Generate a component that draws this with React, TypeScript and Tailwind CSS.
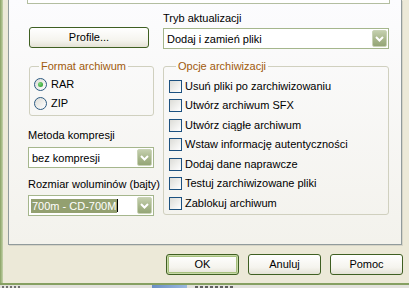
import { Fragment } from "react";

type ComboProps = {
  value: string;
  selected?: boolean;
  className?: string;
};

function DropArrow() {
  return (
    <div className="mr-[1px] flex h-[17px] w-[15px] items-center justify-center rounded-[2px] border border-[#c9d3b6] bg-[linear-gradient(to_bottom,#c4cfae,#a5b488_60%,#95a677)]">
      <svg width="9" height="6" viewBox="0 0 9 6">
        <path d="M1 1 L4.5 4.5 L8 1" fill="none" stroke="#ffffff" strokeWidth="2" />
      </svg>
    </div>
  );
}

function Combo({ value, selected, className }: ComboProps) {
  return (
    <div
      className={`flex h-[21px] items-center justify-between border border-[#a5b68c] bg-white ${className ?? ""}`}
    >
      {selected ? (
        <div className="ml-[2px] flex h-[14px] items-center">
          <span className="bg-[#93a070] pr-[1px] pl-[1px] leading-[14px] text-white">{value}</span>
          <span className="h-[13px] w-[1px] bg-black" />
        </div>
      ) : (
        <span className="pl-[3px] leading-[14px]">{value}</span>
      )}
      <DropArrow />
    </div>
  );
}

function Btn({ label, primary, className }: { label: string; primary?: boolean; className?: string }) {
  return (
    <button
      className={`flex h-[21px] items-center justify-center rounded-[3px] border border-[#3f5f22] bg-[linear-gradient(to_bottom,#ffffff,#f5f4ee_65%,#e4e2d6)] leading-[13px] ${
        primary ? "shadow-[inset_0_0_0_1px_#c7d9a8,inset_0_0_0_2px_#a6c07d]" : ""
      } ${className ?? ""}`}
    >
      {label}
    </button>
  );
}

function Radio({ label, checked }: { label: string; checked?: boolean }) {
  return (
    <div className="flex h-[13px] items-center gap-[4px]">
      <div className="flex h-[13px] w-[13px] items-center justify-center rounded-full border border-[#2c5a82] bg-[linear-gradient(135deg,#dcdcd7,#ffffff)]">
        {checked && <div className="h-[5px] w-[5px] rounded-full bg-[radial-gradient(circle_at_35%_35%,#7fd67f,#1f961f)]" />}
      </div>
      <span className="leading-[13px]">{label}</span>
    </div>
  );
}

function Check({ label, className }: { label: string; className?: string }) {
  return (
    <div className={`flex h-[13px] items-center gap-[3px] ${className ?? ""}`}>
      <div className="h-[13px] w-[13px] shrink-0 border border-[#1c5180] bg-[linear-gradient(135deg,#dcdcd7,#ffffff)]" />
      <span className="leading-[13px] whitespace-nowrap">{label}</span>
    </div>
  );
}

const options = [
  "Usuń pliki po zarchiwizowaniu",
  "Utwórz archiwum SFX",
  "Utwórz ciągłe archiwum",
  "Wstaw informację autentyczności",
  "Dodaj dane naprawcze",
  "Testuj zarchiwizowane pliki",
  "Zablokuj archiwum",
];

export default function App() {
  return (
    <div className="flex h-[288px] w-[409px] flex-col overflow-hidden bg-[#dcdbd4] font-['Liberation_Sans',Arial,sans-serif] text-[11px] text-black">
      <div className="flex h-[285px] border-b-2 border-[#86a062] bg-[#ece9d8]">
        <div className="w-[3px] bg-[linear-gradient(to_right,#88a064,#a6bb86,#c6d2ac)]" />
        <div className="flex flex-1 flex-col">
          {/* tab page */}
          <div className="ml-[5px] h-[245px] w-[394px] border-x border-b border-[#919b9c] bg-[linear-gradient(to_bottom,#fcfcfe,#f3f2ec)] shadow-[1px_1px_0_#d6d4c6]">
            <div className="ml-[18px] h-[4px] w-[363px] border-x border-b border-[#b3bea0] bg-white" />
            <div className="flex gap-[9px] pl-[19px]">
              {/* left column */}
              <div className="flex w-[126px] flex-col">
                <Btn label="Profile..." className="mt-[23px] ml-[1px] w-[120px]" />
                <fieldset className="mt-[12px] ml-[1px] h-[56px] w-[125px] rounded-[3px] border border-[#d0d0bf] pl-[4px]">
                  <legend className="ml-[5px] px-[2px] leading-[13px] text-[#a05a0c]">Format archiwum</legend>
                  <div className="mt-[5px] flex flex-col gap-[6px]">
                    <Radio label="RAR" checked />
                    <Radio label="ZIP" />
                  </div>
                </fieldset>
                <span className="mt-[13px] leading-[13px]">Metoda kompresji</span>
                <Combo value="bez kompresji" className="mt-[5px]" />
                <span className="mt-[10px] leading-[13px] whitespace-nowrap">Rozmiar woluminów (bajty)</span>
                <Combo value="700m - CD-700M" selected className="mt-[4px]" />
              </div>
              {/* right column */}
              <div className="flex w-[226px] flex-col">
                <span className="mt-[8px] leading-[13px]">Tryb aktualizacji</span>
                <Combo value="Dodaj i zamień pliki" className="mt-[3px]" />
                <fieldset className="mt-[11px] h-[155px] rounded-[3px] border border-[#d0d0bf] pl-[5px]">
                  <legend className="ml-[7px] px-[2px] leading-[13px] text-[#a05a0c]">Opcje archiwizacji</legend>
                  <div className="mt-[7px] flex flex-col">
                    {options.map((o, i) => (
                      <Fragment key={o}>
                        <Check label={o} className={i === 0 ? "" : i % 2 === 1 ? "mt-[6px]" : "mt-[7px]"} />
                      </Fragment>
                    ))}
                  </div>
                </fieldset>
              </div>
            </div>
          </div>
          {/* dialog buttons */}
          <div className="mt-[9px] flex justify-end gap-[9px] pr-[6px]">
            <Btn label="OK" primary className="w-[73px]" />
            <Btn label="Anuluj" className="w-[73px]" />
            <Btn label="Pomoc" className="w-[73px]" />
          </div>
        </div>
      </div>
      {/* taskbar fragment */}
      <div className="flex h-[3px] items-end bg-[#e2e1dc]">
        <div className="ml-[2px] h-[2px] w-[18px] bg-[repeating-linear-gradient(to_right,#707070_0_2px,transparent_2px_4px)]" />
        <div className="ml-[132px] h-[3px] w-[35px] bg-[linear-gradient(to_right,#6b8fc4,#9bb8df)]" />
        <div className="ml-[8px] h-[2px] w-[38px] bg-[repeating-linear-gradient(to_right,#606060_0_3px,transparent_3px_5px)]" />
      </div>
    </div>
  );
}
